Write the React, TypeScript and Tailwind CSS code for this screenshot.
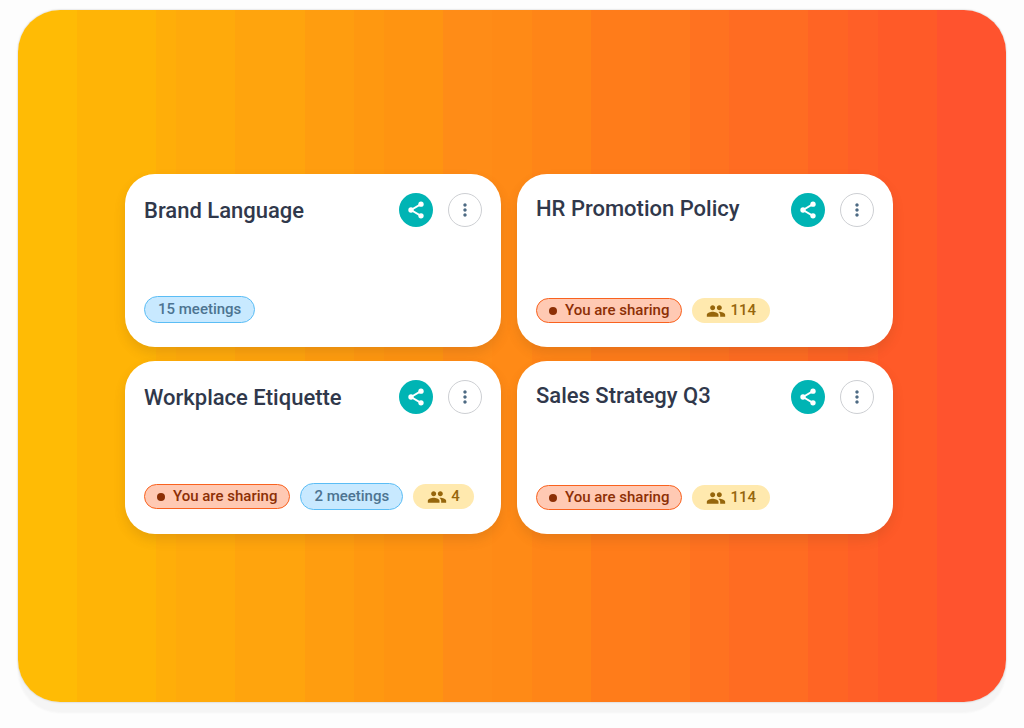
import clsx from "clsx";
import { MdGroup, MdMoreVert } from "react-icons/md";

type Topic = {
  title: string;
  sharing?: boolean;
  meetings?: number;
  people?: number;
};

const topics: Topic[] = [
  { title: "Brand Language", meetings: 15 },
  { title: "HR Promotion Policy", sharing: true, people: 114 },
  { title: "Workplace Etiquette", sharing: true, meetings: 2, people: 4 },
  { title: "Sales Strategy Q3", sharing: true, people: 114 },
];

// warm stripes of the backdrop, each colour runs until its "to" percentage
const stripes = [
  { color: "#ffbb05", to: 6 },
  { color: "#ffb406", to: 14 },
  { color: "#ffae09", to: 16 },
  { color: "#ffaa0b", to: 22 },
  { color: "#ffa40d", to: 29 },
  { color: "#ff9d0f", to: 34 },
  { color: "#ff9810", to: 37 },
  { color: "#ff9411", to: 43 },
  { color: "#ff8c17", to: 48 },
  { color: "#ff8a16", to: 52 },
  { color: "#ff8517", to: 58 },
  { color: "#ff7c1a", to: 64 },
  { color: "#ff791e", to: 68 },
  { color: "#ff7220", to: 72 },
  { color: "#ff6c22", to: 80 },
  { color: "#ff6424", to: 84 },
  { color: "#ff5f27", to: 87 },
  { color: "#ff5a28", to: 93 },
  { color: "#ff532e", to: 100 },
];

const backdrop = `linear-gradient(90deg, ${stripes
  .map((s, i) => `${s.color} ${i === 0 ? 0 : stripes[i - 1].to}% ${s.to}%`)
  .join(", ")})`;

const pillClass = "flex items-center rounded-full text-[15px] font-medium";

function ShareIcon() {
  return (
    <svg className="h-5 w-5" viewBox="0 0 24 24" fill="currentColor">
      <path
        d="M18 5L6 12l12 7"
        fill="none"
        stroke="currentColor"
        strokeWidth={2.2}
      />
      <circle cx="18" cy="5" r="3.2" />
      <circle cx="6" cy="12" r="3.2" />
      <circle cx="18" cy="19" r="3.2" />
    </svg>
  );
}

function SharingPill() {
  return (
    <span
      className={clsx(
        pillClass,
        "h-[25px] gap-2 border border-[#f9621f] bg-[#ffc9b3] px-3 text-[#8c2f05]"
      )}
    >
      <span className="h-2 w-2 rounded-full bg-[#8c2f05]" />
      You are sharing
    </span>
  );
}

function MeetingsPill({ count }: { count: number }) {
  return (
    <span
      className={clsx(
        pillClass,
        "h-[27px] border border-[#5bbdf5] bg-[#c8e9ff] px-[13px] text-[#4d7491]"
      )}
    >
      {count} meetings
    </span>
  );
}

function PeoplePill({ count }: { count: number }) {
  return (
    <span
      className={clsx(
        pillClass,
        "h-[25px] gap-1 bg-[#ffe9ae] px-3.5 text-[#96660c]"
      )}
    >
      <MdGroup className="h-5 w-5" />
      {count}
    </span>
  );
}

function TopicCard({ topic }: { topic: Topic }) {
  return (
    <article className="flex min-h-[173px] flex-col justify-between rounded-[30px] bg-white px-[19px] pb-6 pt-[19px] shadow-[0_6px_12px_rgba(90,60,20,0.14)]">
      <div className="flex items-start justify-between">
        <h2
          className={clsx(
            "text-[22px] font-medium leading-8 text-[#30384b]",
            topic.meetings && "pt-0.5"
          )}
        >
          {topic.title}
        </h2>
        <div className="flex gap-[15px]">
          <button
            type="button"
            aria-label={`Share ${topic.title}`}
            className="flex h-[34px] w-[34px] items-center justify-center rounded-full bg-[#00b4b4] text-white"
          >
            <ShareIcon />
          </button>
          <button
            type="button"
            aria-label={`More options for ${topic.title}`}
            className="flex h-[34px] w-[34px] items-center justify-center rounded-full border border-[#cdcfd3] text-[#4d6a83]"
          >
            <MdMoreVert className="h-5 w-5" />
          </button>
        </div>
      </div>

      <div className="flex items-center gap-2.5">
        {topic.sharing && <SharingPill />}
        {topic.meetings && <MeetingsPill count={topic.meetings} />}
        {topic.people && <PeoplePill count={topic.people} />}
      </div>
    </article>
  );
}

export default function App() {
  return (
    <div className="min-h-screen bg-[#fdfdfd] px-[18px] pb-[26px] pt-2.5 font-['Roboto',sans-serif]">
      <main
        className="rounded-[42px] pb-[168px] pl-[107px] pr-[113px] pt-[164px] shadow-[0_0_2px_rgba(0,0,0,0.25),0_11px_2px_#f5f5f5]"
        style={{ backgroundImage: backdrop }}
      >
        <div className="grid grid-cols-2 gap-x-4 gap-y-3.5">
          {topics.map((topic) => (
            <TopicCard key={topic.title} topic={topic} />
          ))}
        </div>
      </main>
    </div>
  );
}
